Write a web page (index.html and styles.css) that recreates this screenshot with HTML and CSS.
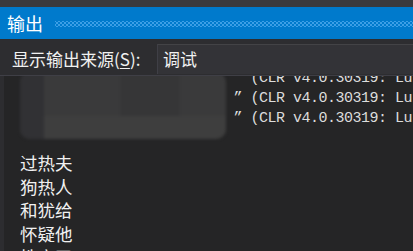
FILE: index.html
```html
<!DOCTYPE html>
<html>
<head>
<meta charset="utf-8">
<link rel="stylesheet" href="styles.css">
</head>
<body>
<div class="window">
  <div class="topstrip"></div>
  <div class="titlebar">
    <span class="title">输出</span>
    <div class="grip"></div>
  </div>
  <div class="toolbar">
    <span class="label">显示输出来源(<u>S</u>):</span>
    <div class="combo">调试</div>
  </div>
  <div class="content">
    <div class="lines">
      <div class="mono">                             (CLR v4.0.30319: Lu</div>
      <div class="mono">                           ” (CLR v4.0.30319: Lu</div>
      <div class="mono">                           ” (CLR v4.0.30319: Lu</div>
      <div class="gap"></div>
      <div class="cjk">过热夫</div>
      <div class="cjk">狗热人</div>
      <div class="cjk">和犹给</div>
      <div class="cjk">怀疑他</div>
      <div class="cjk">性官了</div>
    </div>
    <div class="blur">
      <div class="blk b1"></div>
      <div class="blk b2"></div>
      <div class="blk b3"></div>
    </div>
  </div>
</div>
</body>
</html>
```
FILE: styles.css
```css
html, body {
  margin: 0;
  padding: 0;
  background: #252526;
  overflow: hidden;
}
.window {
  width: 413px;
  height: 251px;
  display: flex;
  flex-direction: column;
  font-family: "Noto Sans CJK SC", sans-serif;
}
.topstrip {
  height: 7px;
  background: #3a3a3e;
  flex: none;
}
.titlebar {
  height: 32px;
  background: #007acc;
  display: flex;
  align-items: center;
  flex: none;
}
.title {
  color: #ffffff;
  font-size: 18px;
  line-height: 32px;
  padding-left: 7px;
  padding-right: 12px;
}
.grip {
  flex: 1;
  height: 6px;
  margin-top: 1px;
  background-image:
    radial-gradient(circle, #3d9fe6 0.9px, transparent 1.1px),
    radial-gradient(circle, #3d9fe6 0.9px, transparent 1.1px);
  background-size: 4px 4px, 4px 4px;
  background-position: 0 0, 2px 2px;
}
.toolbar {
  height: 37px;
  background: #2d2d30;
  display: flex;
  align-items: flex-end;
  flex: none;
  border-bottom: 1px solid #3f3f46;
  box-sizing: border-box;
}
.label {
  color: #f1f1f1;
  font-size: 17px;
  line-height: 30px;
  padding-left: 12px;
  width: 145px;
  white-space: nowrap;
  margin-bottom: 1px;
}
.label u {
  text-decoration-thickness: 1px;
  text-underline-offset: 2px;
}
.combo {
  flex: 1;
  height: 30px;
  margin-bottom: 1px;
  background: #333337;
  border-top: 1px solid #434346;
  border-left: 1px solid #3f3f46;
  box-sizing: border-box;
  color: #f1f1f1;
  font-size: 17px;
  line-height: 28px;
  padding-left: 5px;
}
.content {
  flex: 1;
  position: relative;
  overflow: hidden;
  background: #252526;
  border-left: 4px solid #2d2d30;
}
.lines {
  margin-top: -7px;
  padding-left: 16px;
}
.mono {
  font-family: "Liberation Mono", monospace;
  font-size: 15px;
  letter-spacing: -0.5px;
  line-height: 20px;
  height: 20px;
  white-space: pre;
  color: #dcdcdc;
  margin-left: -16px;
}
.gap {
  height: 22px;
}
.cjk {
  font-size: 17.5px;
  line-height: 23.5px;
  height: 23.5px;
  color: #f1f1f1;
  white-space: nowrap;
}
.blur {
  position: absolute;
  left: 16px;
  top: -4px;
  width: 206px;
  height: 67px;
  background: #3a3a3b;
  border-radius: 10px;
  filter: blur(1.5px);
  overflow: hidden;
}
.blk {
  position: absolute;
}
.b1 {
  left: 0;
  top: 0;
  width: 24px;
  height: 67px;
  background: #313134;
}
.b2 {
  left: 100px;
  top: 0;
  width: 60px;
  height: 67px;
  background: #363637;
}
.b3 {
  left: 24px;
  top: 44px;
  width: 182px;
  height: 23px;
  background: #3e3e3e;
}
```
